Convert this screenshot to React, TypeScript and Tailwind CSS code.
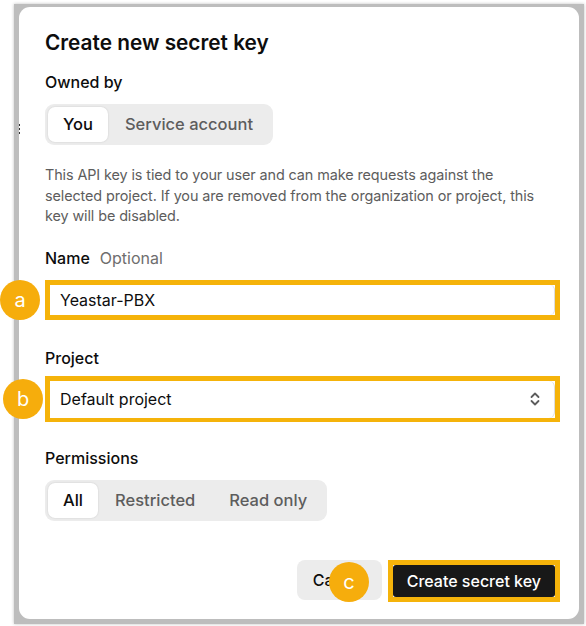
import { useState } from "react";

const OWNERS = ["You", "Service account"];
const PERMISSIONS = ["All", "Restricted", "Read only"];

function Segmented({ items, active, onPick }: { items: string[]; active: string; onPick: (v: string) => void }) {
    return (
        <div className="inline-flex items-center rounded-[9px] bg-[#ececec] p-[3px]">
            {items.map(item => (
                <button
                    key={item}
                    onClick={() => onPick(item)}
                    className={
                        item === active
                            ? "h-[35px] rounded-[7px] bg-white px-[15px] text-[16.5px] font-medium text-[#0d0d0d] shadow-[0_0_2px_rgba(0,0,0,0.15)]"
                            : "h-[35px] px-[17px] text-[16.5px] font-medium text-[#5d5d5d]"
                    }
                >
                    {item}
                </button>
            ))}
        </div>
    );
}

// Orange numbered callouts drawn over the dialog
function Marker({ label, className }: { label: string; className: string }) {
    return (
        <div className={`absolute flex h-[40px] w-[40px] items-center justify-center rounded-full bg-[#f6ad0c] text-[20px] text-white ${className}`}>
            {label}
        </div>
    );
}

export default function App() {
    const [owner, setOwner] = useState("You");
    const [permission, setPermission] = useState("All");

    return (
        <div className="relative h-[626px] w-[586px] overflow-hidden bg-white font-['Inter',sans-serif]">
            {/* screenshot frame behind the dialog */}
            <div className="ml-[14px] mt-[4px] h-[620px] w-[570px] bg-[#bdbdbd] pb-[5px] pl-[5px] pr-[5px] pt-[3px] shadow-[0_0_3px_rgba(0,0,0,0.25)]">
                <div className="h-full rounded-[11px] bg-white pl-[26px] pr-[19px] pt-[22px]">
                    <h2 className="text-[20.8px] font-semibold leading-[28px] text-[#0d0d0d]">Create new secret key</h2>

                    <div className="mt-[13px] text-[16px] font-medium leading-[24px] text-[#0d0d0d]">Owned by</div>
                    <div className="mt-[10px]">
                        <Segmented items={OWNERS} active={owner} onPick={setOwner} />
                    </div>

                    <p className="mt-[20px] whitespace-nowrap text-[14.4px] leading-[20.5px] tracking-[-0.1px] text-[#5d5d5d]">
                        This API key is tied to your user and can make requests against the
                        <br />
                        selected project. If you are removed from the organization or project, this
                        <br />
                        key will be disabled.
                    </p>

                    <div className="mt-[19px] flex items-center gap-[10px] text-[16px] leading-[24px]">
                        <span className="font-medium text-[#0d0d0d]">Name</span>
                        <span className="text-[#6e6e6e]">Optional</span>
                    </div>
                    <div className="mt-[10px] h-[40px] border-[5px] border-[#f5b30a]">
                        <div className="flex h-full items-center rounded-r-[5px] border-r border-[#dcdcdc] bg-white pl-[10px] text-[16px] text-[#0d0d0d]">
                            Yeastar-PBX
                        </div>
                    </div>

                    <div className="mt-[26px] text-[16px] font-medium leading-[24px] text-[#0d0d0d]">Project</div>
                    <div className="mt-[6px] h-[46px] border-[5px] border-b-[4px] border-[#f5b30a]">
                        <div className="flex h-full items-center justify-between rounded-r-[6px] border-r border-[#dcdcdc] bg-white pl-[10px] pr-[13px] text-[16px] text-[#0d0d0d]">
                            <span>Default project</span>
                            <svg width="12" height="16" viewBox="0 0 12 16" fill="none" stroke="#5d5d5d" strokeWidth="1.8" strokeLinecap="round" strokeLinejoin="round">
                                <path d="M2.5 6 6 2.5 9.5 6" />
                                <path d="M2.5 10 6 13.5 9.5 10" />
                            </svg>
                        </div>
                    </div>

                    <div className="mt-[24px] text-[16px] font-medium leading-[24px] text-[#0d0d0d]">Permissions</div>
                    <div className="mt-[10px]">
                        <Segmented items={PERMISSIONS} active={permission} onPick={setPermission} />
                    </div>

                    <div className="mt-[39px] flex justify-end gap-[6px]">
                        <button className="h-[40px] w-[85px] rounded-[8px] bg-[#ececec] pl-[16px] text-left text-[16px] font-medium text-[#0d0d0d]">
                            Cancel
                        </button>
                        <div className="h-[42px] border-[5px] border-[#f5b30a]">
                            <button className="h-full rounded-[3px] bg-[#181818] px-[14px] text-[16px] font-medium text-white">
                                Create secret key
                            </button>
                        </div>
                    </div>
                </div>
            </div>

            {/* tiny handle mark on the frame edge */}
            <div className="absolute left-[19px] top-[124px] flex flex-col gap-[2px]">
                <span className="h-[2px] w-[1px] bg-[#333]" />
                <span className="h-[2px] w-[1px] bg-[#333]" />
                <span className="h-[2px] w-[1px] bg-[#333]" />
            </div>

            <Marker label="a" className="left-0 top-[280px]" />
            <Marker label="b" className="left-[3px] top-[379px]" />
            <Marker label="c" className="left-[329px] top-[562px]" />
        </div>
    );
}
